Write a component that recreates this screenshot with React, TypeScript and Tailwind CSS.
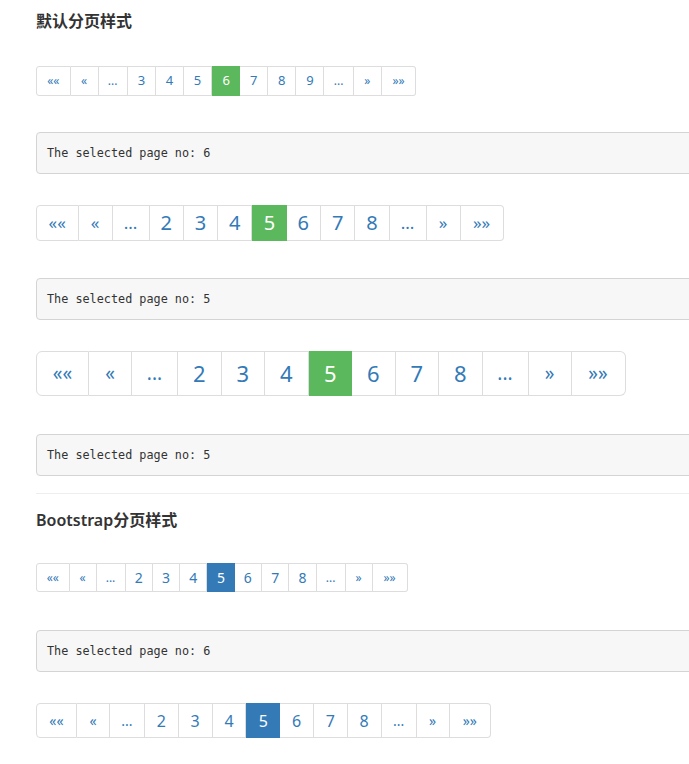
import React from "react";

type Size = {
  height: string;
  text: string;
  arrowText: string;
  roundL: string;
  roundR: string;
  wFirst: string;
  wPrev: string;
  wDots: string;
  wNum: string;
  wNext: string;
  wLast: string;
};

const sizes: Record<string, Size> = {
  sm: {
    height: "h-[30px]",
    text: "text-[13px]",
    arrowText: "text-[12px]",
    roundL: "rounded-l-[3px]",
    roundR: "rounded-r-[3px]",
    wFirst: "w-[34.5px]",
    wPrev: "w-[28px]",
    wDots: "w-[29.3px]",
    wNum: "w-[28.1px]",
    wNext: "w-[28px]",
    wLast: "w-[34.5px]",
  },
  md: {
    height: "h-[36px]",
    text: "text-[20px]",
    arrowText: "text-[17px]",
    roundL: "rounded-l-[4px]",
    roundR: "rounded-r-[4px]",
    wFirst: "w-[42.5px]",
    wPrev: "w-[34px]",
    wDots: "w-[37px]",
    wNum: "w-[34.3px]",
    wNext: "w-[34px]",
    wLast: "w-[43px]",
  },
  lg: {
    height: "h-[45px]",
    text: "text-[22px]",
    arrowText: "text-[19px]",
    roundL: "rounded-l-[6px]",
    roundR: "rounded-r-[6px]",
    wFirst: "w-[53px]",
    wPrev: "w-[43px]",
    wDots: "w-[46px]",
    wNum: "w-[43.5px]",
    wNext: "w-[43px]",
    wLast: "w-[54px]",
  },
  bsSm: {
    height: "h-[29px]",
    text: "text-[14px]",
    arrowText: "text-[12px]",
    roundL: "rounded-l-[3px]",
    roundR: "rounded-r-[3px]",
    wFirst: "w-[33.5px]",
    wPrev: "w-[27px]",
    wDots: "w-[29px]",
    wNum: "w-[27.3px]",
    wNext: "w-[27px]",
    wLast: "w-[35px]",
  },
  bsMd: {
    height: "h-[35px]",
    text: "text-[16px]",
    arrowText: "text-[14px]",
    roundL: "rounded-l-[4px]",
    roundR: "rounded-r-[4px]",
    wFirst: "w-[41px]",
    wPrev: "w-[33px]",
    wDots: "w-[35px]",
    wNum: "w-[33.8px]",
    wNext: "w-[33px]",
    wLast: "w-[41.5px]",
  },
};

function Pager({
  pages,
  active,
  size,
  activeBg,
}: {
  pages: number[];
  active: number;
  size: Size;
  activeBg: string;
}) {
  const base = `flex items-center justify-center border-y border-r border-[#dddddd] bg-white text-[#337ab7] ${size.height}`;
  return (
    <div className="flex">
      <span className={`${base} border-l ${size.roundL} ${size.wFirst} ${size.arrowText}`}>««</span>
      <span className={`${base} ${size.wPrev} ${size.arrowText}`}>«</span>
      <span className={`${base} ${size.wDots} ${size.arrowText}`}>...</span>
      {pages.map((p) =>
        p === active ? (
          <span
            key={p}
            className={`flex items-center justify-center text-white ${activeBg} ${size.height} ${size.wNum} ${size.text}`}
          >
            {p}
          </span>
        ) : (
          <span key={p} className={`${base} ${size.wNum} ${size.text}`}>
            {p}
          </span>
        )
      )}
      <span className={`${base} ${size.wDots} ${size.arrowText}`}>...</span>
      <span className={`${base} ${size.wNext} ${size.arrowText}`}>»</span>
      <span className={`${base} ${size.roundR} ${size.wLast} ${size.arrowText}`}>»»</span>
    </div>
  );
}

function Selected({ page }: { page: number }) {
  return (
    <div className="h-[42px] flex items-center rounded-l-[4px] border border-[#d4d4d4] bg-[#f7f7f7] pl-[10px] pt-px font-['DejaVu_Sans_Mono',monospace] text-[11.8px] text-[#333333]">
      The selected page no: {page}
    </div>
  );
}

export default function App() {
  return (
    <div className="w-full overflow-hidden bg-white font-['Noto_Sans','Noto_Sans_CJK_SC',sans-serif]">
      <div className="ml-[36px] w-[720px] pt-[10px] pb-[26px]">
        <h4 className="h-[22px] text-[16px] leading-[22px] font-semibold text-[#333333]">默认分页样式</h4>

        <div className="mt-[34px]">
          <Pager pages={[3, 4, 5, 6, 7, 8, 9]} active={6} size={sizes.sm} activeBg="bg-[#5cb85c]" />
        </div>
        <div className="mt-[36px]">
          <Selected page={6} />
        </div>

        <div className="mt-[31px]">
          <Pager pages={[2, 3, 4, 5, 6, 7, 8]} active={5} size={sizes.md} activeBg="bg-[#5cb85c]" />
        </div>
        <div className="mt-[37px]">
          <Selected page={5} />
        </div>

        <div className="mt-[31px]">
          <Pager pages={[2, 3, 4, 5, 6, 7, 8]} active={5} size={sizes.lg} activeBg="bg-[#5cb85c]" />
        </div>
        <div className="mt-[38px]">
          <Selected page={5} />
        </div>

        <div className="mt-[17px] h-px bg-[#eeeeee]" />

        <h4 className="mt-[15px] h-[22px] text-[16px] leading-[22px] font-semibold text-[#333333]">Bootstrap分页样式</h4>

        <div className="mt-[32px]">
          <Pager pages={[2, 3, 4, 5, 6, 7, 8]} active={5} size={sizes.bsSm} activeBg="bg-[#337ab7]" />
        </div>
        <div className="mt-[38px]">
          <Selected page={6} />
        </div>

        <div className="mt-[31px]">
          <Pager pages={[2, 3, 4, 5, 6, 7, 8]} active={5} size={sizes.bsMd} activeBg="bg-[#337ab7]" />
        </div>
      </div>
    </div>
  );
}
